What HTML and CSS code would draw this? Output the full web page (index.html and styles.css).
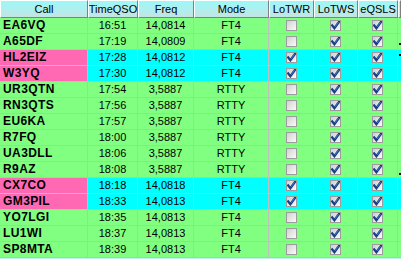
FILE: index.html
```html
<!DOCTYPE html>
<html>
<head>
<meta charset="utf-8">
<link rel="stylesheet" href="styles.css">
</head>
<body>
<div class="grid">
  <div class="row head">
    <div class="hc">Call</div><div class="hc">TimeQSO</div><div class="hc">Freq</div><div class="hc">Mode</div><div class="hc">LoTWR</div><div class="hc">LoTWS</div><div class="hc">eQSLS</div><div class="hc"></div>
  </div>
  <div class="row g"><div class="c call">EA6VQ</div><div class="c">16:51</div><div class="c">14,0814</div><div class="c">FT4</div><div class="c"><span class="cb"></span></div><div class="c"><span class="cb on"></span></div><div class="c"><span class="cb on"></span></div><div class="c x"></div></div>
  <div class="row g"><div class="c call">A65DF</div><div class="c">17:19</div><div class="c">14,0809</div><div class="c">FT4</div><div class="c"><span class="cb"></span></div><div class="c"><span class="cb on"></span></div><div class="c"><span class="cb on"></span></div><div class="c x"><span class="mark low"></span></div></div>
  <div class="row b"><div class="c call">HL2EIZ</div><div class="c">17:28</div><div class="c">14,0812</div><div class="c">FT4</div><div class="c"><span class="cb on"></span></div><div class="c"><span class="cb on"></span></div><div class="c"><span class="cb on"></span></div><div class="c x"><span class="mark high"></span></div></div>
  <div class="row b"><div class="c call">W3YQ</div><div class="c">17:30</div><div class="c">14,0812</div><div class="c">FT4</div><div class="c"><span class="cb on"></span></div><div class="c"><span class="cb on"></span></div><div class="c"><span class="cb on"></span></div><div class="c x"></div></div>
  <div class="row g"><div class="c call">UR3QTN</div><div class="c">17:54</div><div class="c">3,5887</div><div class="c">RTTY</div><div class="c"><span class="cb"></span></div><div class="c"><span class="cb on"></span></div><div class="c"><span class="cb on"></span></div><div class="c x"></div></div>
  <div class="row g"><div class="c call">RN3QTS</div><div class="c">17:56</div><div class="c">3,5887</div><div class="c">RTTY</div><div class="c"><span class="cb"></span></div><div class="c"><span class="cb on"></span></div><div class="c"><span class="cb on"></span></div><div class="c x"></div></div>
  <div class="row g"><div class="c call">EU6KA</div><div class="c">17:57</div><div class="c">3,5887</div><div class="c">RTTY</div><div class="c"><span class="cb"></span></div><div class="c"><span class="cb on"></span></div><div class="c"><span class="cb on"></span></div><div class="c x"></div></div>
  <div class="row g"><div class="c call">R7FQ</div><div class="c">18:00</div><div class="c">3,5887</div><div class="c">RTTY</div><div class="c"><span class="cb"></span></div><div class="c"><span class="cb on"></span></div><div class="c"><span class="cb on"></span></div><div class="c x"></div></div>
  <div class="row g"><div class="c call">UA3DLL</div><div class="c">18:06</div><div class="c">3,5887</div><div class="c">RTTY</div><div class="c"><span class="cb"></span></div><div class="c"><span class="cb on"></span></div><div class="c"><span class="cb on"></span></div><div class="c x"></div></div>
  <div class="row g"><div class="c call">R9AZ</div><div class="c">18:08</div><div class="c">3,5887</div><div class="c">RTTY</div><div class="c"><span class="cb"></span></div><div class="c"><span class="cb on"></span></div><div class="c"><span class="cb on"></span></div><div class="c x"><span class="mark top"></span></div></div>
  <div class="row b"><div class="c call">CX7CO</div><div class="c">18:18</div><div class="c">14,0818</div><div class="c">FT4</div><div class="c"><span class="cb on"></span></div><div class="c"><span class="cb on"></span></div><div class="c"><span class="cb on"></span></div><div class="c x"></div></div>
  <div class="row b"><div class="c call">GM3PIL</div><div class="c">18:33</div><div class="c">14,0813</div><div class="c">FT4</div><div class="c"><span class="cb on"></span></div><div class="c"><span class="cb on"></span></div><div class="c"><span class="cb on"></span></div><div class="c x"></div></div>
  <div class="row g"><div class="c call">YO7LGI</div><div class="c">18:35</div><div class="c">14,0813</div><div class="c">FT4</div><div class="c"><span class="cb"></span></div><div class="c"><span class="cb on"></span></div><div class="c"><span class="cb on"></span></div><div class="c x"></div></div>
  <div class="row g"><div class="c call">LU1WI</div><div class="c">18:37</div><div class="c">14,0813</div><div class="c">FT4</div><div class="c"><span class="cb"></span></div><div class="c"><span class="cb on"></span></div><div class="c"><span class="cb on"></span></div><div class="c x"></div></div>
  <div class="row g"><div class="c call">SP8MTA</div><div class="c">18:39</div><div class="c">14,0813</div><div class="c">FT4</div><div class="c"><span class="cb"></span></div><div class="c"><span class="cb on"></span></div><div class="c"><span class="cb on"></span></div><div class="c x"></div></div>
</div>
</body>
</html>
```
FILE: styles.css
```css
html, body {
  margin: 0;
  padding: 0;
  background: #c4f0f0;
  width: 401px;
  height: 259px;
  overflow: hidden;
}
.grid {
  font-family: "Liberation Sans", Arial, sans-serif;
  font-size: 11px;
  color: #000;
  width: 401px;
}
.row {
  display: grid;
  grid-template-columns: 88px 50px 56px 75px 45px 44px 40px 3px;
  height: 16px;
}
.head {
  height: 18px;
}
.hc {
  box-sizing: border-box;
  height: 18px;
  background: linear-gradient(to bottom, #9cf8f8 0%, #aef0f0 45%, #c4e4e4 100%);
  border-left: 1px solid #ffffff;
  border-top: 1px solid #ffffff;
  border-right: 1px solid #808080;
  border-bottom: 1px solid #808080;
  display: flex;
  align-items: center;
  justify-content: center;
  line-height: 16px;
  font-size: 11px;
  overflow: hidden;
  white-space: nowrap;
}
.c {
  box-sizing: border-box;
  height: 16px;
  border-right: 1px solid #c0c0c0;
  border-bottom: 1px solid #c0c0c0;
  display: flex;
  align-items: center;
  justify-content: center;
  line-height: 15px;
  overflow: hidden;
  white-space: nowrap;
}
.c.x {
  justify-content: flex-start;
  align-items: flex-start;
  border-right: none;
  padding-left: 1px;
}
.mark {
  display: block;
  width: 2px;
  height: 2px;
  background: #000;
}
.mark.low { margin-top: 9px; }
.mark.high { margin-top: 4px; }
.mark.top { margin-top: 11px; }
.g .c { background: #80ff80; }
.b .c { background: #00ffff; }
.b .c.call { background: #ff69b4; }
.c.call {
  justify-content: flex-start;
  padding-left: 3px;
  font-weight: bold;
  font-size: 12px;
  letter-spacing: 0.4px;
}
.cb {
  display: block;
  box-sizing: border-box;
  width: 11px;
  height: 11px;
  border: 1px solid #9c9c9c;
  background: linear-gradient(135deg, #d0d0d0 0%, #eaeaea 60%, #fafafa 100%);
  position: relative;
}
.cb.on::after {
  content: "";
  position: absolute;
  left: 0;
  top: 0;
  width: 9px;
  height: 9px;
  background: url("data:image/svg+xml;utf8,<svg xmlns='http://www.w3.org/2000/svg' width='9' height='9' viewBox='0 0 9 9'><path d='M1.2 4.4 L3.4 7.2 L8 0.8' fill='none' stroke='%23173f86' stroke-width='2.3' stroke-linecap='square'/><path d='M4 6 L7.6 1' fill='none' stroke='%234f86d0' stroke-width='0.8'/></svg>") no-repeat;
}
```
